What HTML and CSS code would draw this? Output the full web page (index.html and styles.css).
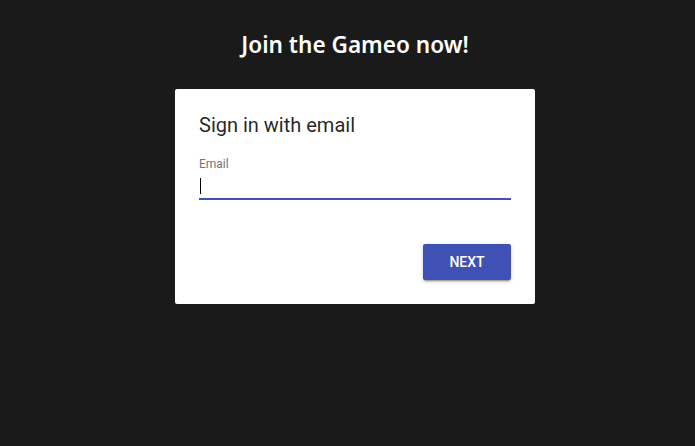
FILE: index.html
```html
<!DOCTYPE html>
<html lang="en">
<head>
<meta charset="utf-8">
<title>Join the Gameo now!</title>
<link rel="stylesheet" href="styles.css">
</head>
<body>
<main class="page">
  <h1 class="headline">Join the Gameo now!</h1>
  <section class="card">
    <h2 class="card-title">Sign in with email</h2>
    <div class="field">
      <label class="field-label">Email</label>
      <div class="field-input"><span class="caret"></span></div>
    </div>
    <div class="actions">
      <button class="btn-next">NEXT</button>
    </div>
  </section>
</main>
</body>
</html>
```
FILE: styles.css
```css
html, body {
  margin: 0;
  padding: 0;
  background: #1a1a1a;
  height: 100%;
}
.page {
  display: flex;
  flex-direction: column;
  align-items: center;
  padding-top: 30px;
  padding-left: 15px;
}
.headline {
  margin: 0;
  font-family: "Noto Sans", "Open Sans", sans-serif;
  font-weight: 600;
  font-size: 22.6px;
  line-height: 30px;
  color: #ffffff;
}
.card {
  margin-top: 29px;
  width: 360px;
  box-sizing: border-box;
  background: #ffffff;
  border-radius: 2px;
  padding: 24px 24px 24px;
  font-family: Roboto, "Liberation Sans", sans-serif;
}
.card-title {
  margin: 0;
  font-size: 20px;
  font-weight: 400;
  line-height: 24px;
  color: rgba(0,0,0,.87);
}
.field {
  margin-top: 19px;
  display: flex;
  flex-direction: column;
}
.field-label {
  font-size: 12px;
  line-height: 16px;
  color: #757575;
}
.field-input {
  height: 23px;
  padding-top: 3px;
  border-bottom: 2px solid #3f51b5;
  display: flex;
  align-items: flex-start;
}
.caret {
  width: 1px;
  height: 16px;
  margin-left: 1px;
  margin-top: 3px;
  background: #000;
}
.actions {
  margin-top: 44px;
  display: flex;
  justify-content: flex-end;
}
.btn-next {
  width: 88px;
  height: 36px;
  border: none;
  border-radius: 2px;
  background: #3f51b5;
  color: #ffffff;
  font-family: Roboto, "Liberation Sans", sans-serif;
  font-weight: 500;
  font-size: 14px;
  letter-spacing: 0;
  box-shadow: 0 2px 2px 0 rgba(0,0,0,.14), 0 3px 1px -2px rgba(0,0,0,.2), 0 1px 5px 0 rgba(0,0,0,.12);
  cursor: pointer;
}
```
